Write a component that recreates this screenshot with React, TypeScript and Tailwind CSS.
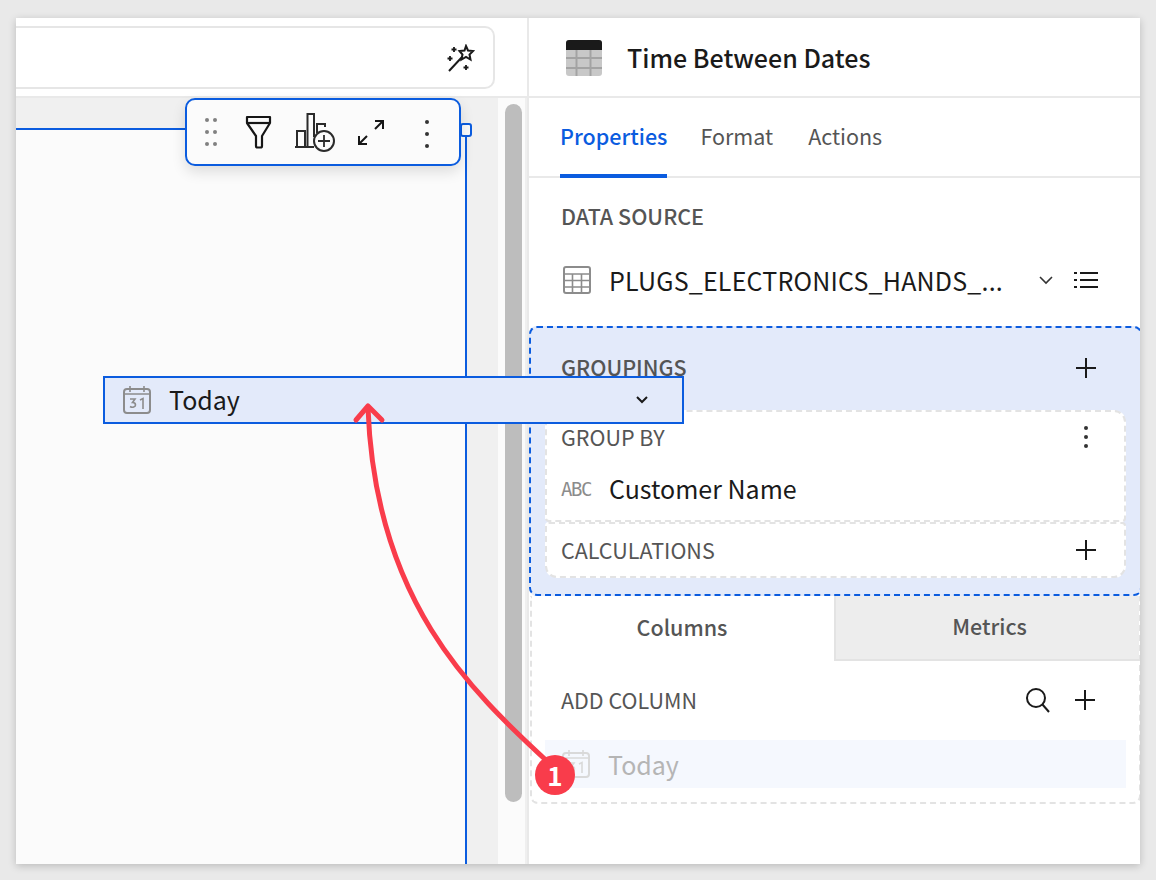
import React from 'react';

const FONT = "font-['Noto_Sans_CJK_JP','Noto_Sans',sans-serif]";

const Plus = ({ className = '' }: { className?: string }) => (
  <svg width="22" height="22" viewBox="0 0 22 22" fill="none" stroke="#1a1a1a" strokeWidth="2" className={className}>
    <path d="M11 1v20M1 11h20" />
  </svg>
);

const CalendarIcon = ({ color = '#8c8c8c' }: { color?: string }) => (
  <svg width="28" height="28" viewBox="0 0 28 28" fill="none" stroke={color} strokeWidth="2">
    <rect x="1" y="3" width="26" height="24" rx="3" />
    <path d="M7 0v6M21 0v6M1 8h26" strokeWidth="1.6" />
    <path d="M7 13h5l-2.500 3.500c2 0 3 1 3 2.500 0 2-3 3-5.500 1.500M17 14l3-1.500V23" strokeWidth="1.6" />
  </svg>
);

const Dots = ({ color, gap }: { color: string; gap: string }) => (
  <div className={`flex flex-col ${gap}`}>
    <span className="w-1 h-1 rounded-full" style={{ backgroundColor: color }} />
    <span className="w-1 h-1 rounded-full" style={{ backgroundColor: color }} />
    <span className="w-1 h-1 rounded-full" style={{ backgroundColor: color }} />
  </div>
);

function Toolbar() {
  return (
    <div className="absolute left-[185px] top-[98px] w-[276px] h-[68px] bg-[#fbfbfb] border-2 border-[#0b5cdf] rounded-[10px] shadow-[0_6px_14px_rgba(0,0,0,0.12)]">
      <div className="absolute left-[18px] top-[18px] flex gap-[4px]">
        <Dots color="#808080" gap="gap-2" />
        <Dots color="#808080" gap="gap-2" />
      </div>
      <svg className="absolute left-[58px] top-[15px]" width="28" height="34" viewBox="0 0 28 34" fill="none" stroke="#161616" strokeWidth="2.200" strokeLinejoin="round">
        <path d="M2 2h23v6L17 21v10a1.500 1.500 0 0 1-1.500 1.500h-3A1.500 1.500 0 0 1 11 31V21L2 8z" />
        <path d="M2 8h23" />
      </svg>
      <svg className="absolute left-[107px] top-[13px]" width="42" height="40" viewBox="0 0 42 40" fill="none" stroke="#2b2b2b" strokeWidth="2">
        <path d="M1 34h19M3 34V18h8v16M13.500 34V1H20v23M23 20V11h8v3" />
        <circle cx="30" cy="28" r="10" fill="#fbfbfb" strokeWidth="2" />
        <path d="M30 22v12M24 28h12" strokeWidth="1.800" />
      </svg>
      <svg className="absolute left-[170px] top-[19px]" width="28" height="27" viewBox="0 0 28 27" fill="none" stroke="#161616" strokeWidth="2">
        <path d="M18 2h8v8M26 2l-8 8M10 25H2v-8M2 25l8-8" />
      </svg>
      <div className="absolute left-[238px] top-[20px]">
        <Dots color="#333333" gap="gap-2" />
      </div>
    </div>
  );
}

function LeftPane() {
  return (
    <div className="w-[511px] flex flex-col shrink-0">
      <div className="h-[78px] shrink-0 pt-2 pr-[32px]">
        <div className="h-[63px] border-2 border-l-0 border-[#e6e6e6] rounded-r-[10px] flex items-center justify-end pr-[18px]">
          <svg width="28" height="28" viewBox="0 0 28 28" fill="none" stroke="#1a1a1a">
            <path d="M2 27L16 12" strokeWidth="2" />
            <path d="M19 2l2 4.500 5 .5-3.500 3.500 1 5-4.500-2.500-4.500 2.500 1-5L12.500 7l5-.5z" strokeWidth="2" fill="#fff" />
            <path d="M7 3v5M4.500 5.500h5M3 12v5M.5 14.500h5M19 21v5M16.500 23.500h5" strokeWidth="1.800" />
          </svg>
        </div>
      </div>
      <div className="flex-1 flex border-t-2 border-[#e9e9e9]">
        <div className="w-[482px] bg-[#f0f0f0] pt-[30px]">
          <div className="h-full w-[451px] bg-[#fbfbfb] border-t-2 border-r-2 border-[#0b5cdf]" />
        </div>
        <div className="flex-1 bg-[#fbfbfb] border-r-2 border-[#efefef] pl-[7px] pt-[6px]">
          <div className="w-[17px] h-[698px] rounded-full bg-[#bdbdbd]" />
        </div>
      </div>
    </div>
  );
}

function RightPane() {
  return (
    <div className="flex-1 min-w-0 overflow-hidden border-l-2 border-[#e9e9e9] flex flex-col text-[#1a1a1a]">
      <div className="h-[78px] shrink-0 flex items-center pl-[37px] gap-[25px] border-b-2 border-[#e9e9e9] box-content">
        <svg className="mt-[2px]" width="36" height="36" viewBox="0 0 36 36">
          <rect width="36" height="36" rx="3" fill="#c8c8c8" />
          <path d="M0 3a3 3 0 0 1 3-3h30a3 3 0 0 1 3 3v7H0z" fill="#1a1a1a" />
          <path d="M0 18h36M0 28h36M10.500 10v26M24.500 10v26" stroke="#a3a3a3" strokeWidth="2" />
        </svg>
        <span className="text-[25px] leading-[32px] font-medium">Time Between Dates</span>
      </div>
      <div className="h-[78px] shrink-0 flex items-end gap-[33px] pl-[31px] border-b-2 border-[#e9e9e9] box-content text-[21.5px]">
        <div className="h-[78px] flex flex-col justify-center border-b-4 border-[#0b5cdf] text-[#0b5cdf] font-medium -mb-[2px] leading-[30px] pb-[2px]">Properties</div>
        <div className="h-[78px] flex items-center text-[#555] leading-[30px] pb-[2px]">Format</div>
        <div className="h-[78px] flex items-center text-[#555] leading-[30px] pb-[2px] ml-[2px]">Actions</div>
      </div>
      <div className="h-[148px] shrink-0 flex flex-col pl-[32px] pt-[23px]">
        <div className="text-[21.5px] leading-[30px] font-medium text-[#555]">DATA SOURCE</div>
        <div className="mt-[35px] flex items-center h-[28px]">
          <svg className="ml-[2px]" width="28" height="28" viewBox="0 0 28 28" fill="none" stroke="#8c8c8c" strokeWidth="2">
            <rect x="1" y="1" width="26" height="26" rx="2" />
            <path d="M1 8h26M1 14.500h26M1 21h26M9.500 8v19M18.500 8v19" strokeWidth="1.600" />
          </svg>
          <span className="ml-[18px] w-[429px] shrink-0 text-[25px] leading-[32px] tracking-[0.2px] whitespace-nowrap">PLUGS_ELECTRONICS_HANDS_...</span>
          <svg width="16" height="10" viewBox="0 0 16 10" fill="none" stroke="#333" strokeWidth="1.600" className="mr-[19px] shrink-0">
            <path d="M2 2l6 6 6-6" />
          </svg>
          <svg className="shrink-0" width="26" height="20" viewBox="0 0 26 20" fill="none" stroke="#1a1a1a" strokeWidth="2">
            <path d="M7 3h18M7 10h18M7 17h18M1 3h3M1 10h3M1 17h3" />
          </svg>
        </div>
      </div>
      <div className="h-[270px] shrink-0 -mr-[2px] bg-[#e3eafa] border-2 border-dashed border-[#0b5cdf] rounded-lg flex flex-col px-[14px]">
        <div className="h-[82px] shrink-0 flex items-center justify-between pl-[16px] pr-[29px] pb-[2px]">
          <span className="text-[21.5px] leading-[30px] font-medium text-[#555] -mt-[2px]">GROUPINGS</span>
          <Plus />
        </div>
        <div className="bg-white rounded-t-xl rounded-b-[4px] border-2 border-dashed border-[#e3e3e3] h-[112px] shrink-0 pl-[14px] pr-[27px] pt-[10px]">
          <div className="flex items-center justify-between h-[30px]">
            <span className="text-[21.5px] leading-[30px] text-[#555]">GROUP BY</span>
            <div className="mr-[9px]"><Dots color="#333333" gap="gap-[5px]" /></div>
          </div>
          <div className="flex items-center mt-[20px]">
            <span className="w-[48px] text-[19px] leading-[28px] text-[#8c8c8c] font-['DejaVu_Sans_Mono',monospace] tracking-[-1.400px] pt-[1px]">ABC</span>
            <span className="text-[25px] leading-[32px]">Customer Name</span>
          </div>
        </div>
        <div className="bg-white rounded-t-[4px] rounded-b-xl border-2 border-dashed border-[#e3e3e3] h-[56px] shrink-0 flex items-center justify-between pl-[14px] pr-[27px]">
          <span className="text-[21.5px] leading-[30px] text-[#555]">CALCULATIONS</span>
          <Plus />
        </div>
      </div>
      <div className="h-[208px] shrink-0 -mr-[1px] ml-[1px] border-2 border-t-0 border-dashed border-[#e3e3e3] rounded-b-lg flex flex-col">
        <div className="h-[65px] flex text-[21.5px] font-medium text-[#555] shrink-0">
          <div className="w-[302px] flex items-center justify-center pb-[3px] pr-[2px]">Columns</div>
          <div className="flex-1 flex items-center justify-center bg-[#ededed] border-l-2 border-b-2 border-[#e3e3e3] pb-[3px] pl-[4px]">Metrics</div>
        </div>
        <div className="h-[78px] shrink-0 flex items-center pl-[29px] pr-[43px]">
          <span className="text-[21.5px] leading-[30px] text-[#555] flex-1">ADD COLUMN</span>
          <svg width="26" height="26" viewBox="0 0 26 26" fill="none" stroke="#1a1a1a" strokeWidth="2" className="mr-[23px]">
            <circle cx="11" cy="11" r="9" />
            <path d="M17.500 17.500L24 25" />
          </svg>
          <Plus />
        </div>
        <div className="h-[48px] mt-[1px] ml-[13px] mr-[13px] bg-[#f5f8fe] flex items-center pl-[17px] gap-[18px]">
          <CalendarIcon color="#d9d9d9" />
          <span className="text-[25px] leading-[32px] text-[#b5b5b5]">Today</span>
        </div>
      </div>
    </div>
  );
}

export default function App() {
  return (
    <div className={`relative w-[1156px] h-[880px] overflow-hidden bg-[#e9e9e9] pt-[18px] pl-[16px] ${FONT}`}>
      <div className="w-[1124px] h-[846px] bg-white flex shadow-[0_2px_8px_rgba(0,0,0,0.2)]">
        <LeftPane />
        <RightPane />
      </div>

      {/* resize handle on the selected element */}
      <div className="absolute left-[460px] top-[123px] w-[12px] h-[14px] bg-[#fbfbfb] border-2 border-[#0b5cdf] rounded-[3px]" />
      <Toolbar />

      {/* column being dragged */}
      <div className="absolute left-[103px] top-[376px] w-[581px] h-[48px] bg-[#e3eafa] border-2 border-[#0b5cdf] flex items-center pl-[18px] pr-[33px] text-[#1a1a1a]">
        <CalendarIcon />
        <span className="ml-[18px] flex-1 text-[25px] leading-[32px] pb-[2px]">Today</span>
        <svg width="14" height="10" viewBox="0 0 14 10" fill="none" stroke="#1a1a1a" strokeWidth="2">
          <path d="M2 2l5 5 5-5" />
        </svg>
      </div>

      {/* annotation */}
      <svg className="absolute left-0 top-0 pointer-events-none" width="1156" height="880" viewBox="0 0 1156 880" fill="none" stroke="#f93c4b" strokeWidth="5" strokeLinecap="round" strokeLinejoin="round">
        <path d="M548 762C470 690 375 600 368 408" />
        <path d="M356 420L368 406L382 420" />
      </svg>
      <div className="absolute left-[535px] top-[755px] w-[40px] h-[40px] rounded-full bg-[#f93c4b] text-white flex items-center justify-center text-[26px] leading-none font-bold">1</div>
    </div>
  );
}
